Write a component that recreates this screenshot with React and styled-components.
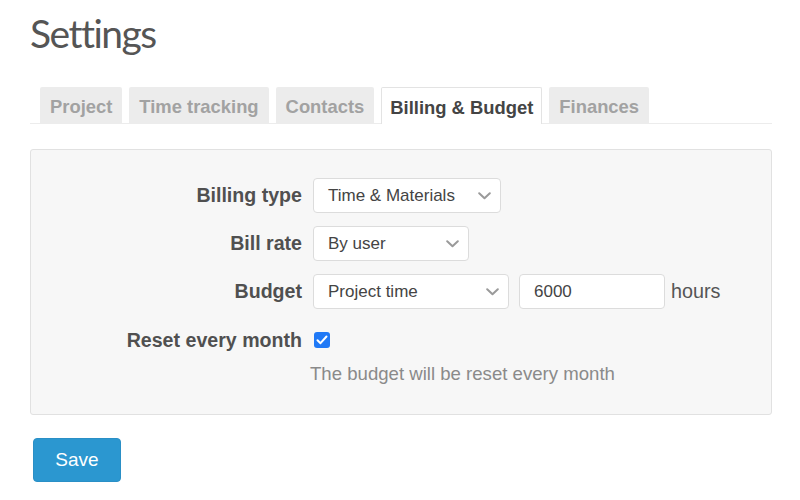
import React from "react";
import styled, { createGlobalStyle } from "styled-components";

const Global = createGlobalStyle`
  html, body { margin: 0; padding: 0; background: #fff; }
  body { font-family: "Liberation Sans", Arial, sans-serif; color: #555; }
`;

const Page = styled.div`
  padding: 9px 28px 0 30px;
`;

const Title = styled.h1`
  margin: 0;
  font-family: Lato, "Open Sans", sans-serif;
  font-weight: 400;
  font-size: 39px;
  line-height: 48px;
  letter-spacing: -1.5px;
  color: #555;
`;

const Tabs = styled.div`
  display: flex;
  gap: 7px;
  margin-top: 30px;
  padding-left: 10px;
  border-bottom: 1px solid #ececec;
`;

const Tab = styled.div`
  box-sizing: border-box;
  height: ${(p) => (p.$active ? "37px" : "36px")};
  line-height: 39px;
  padding: 0 ${(p) => (p.$active ? "8px" : "10px")};
  font-size: 18.4px;
  font-weight: 700;
  color: ${(p) => (p.$active ? "#444" : "#a2a2a2")};
  background: ${(p) => (p.$active ? "#fff" : "#ececec")};
  border: ${(p) => (p.$active ? "1px solid #e3e3e3" : "none")};
  border-bottom: none;
  margin-bottom: ${(p) => (p.$active ? "-1px" : "0")};
  border-radius: 2px 2px 0 0;
`;

const Panel = styled.div`
  margin-top: 25px;
  background: #f7f7f7;
  border: 1px solid #e1e1e1;
  border-radius: 3px;
  padding: 28px 0 29px 0;
`;

const Form = styled.div`
  display: grid;
  grid-template-columns: 271px 1fr;
  column-gap: 11px;
  row-gap: 13px;
`;

const Label = styled.div`
  text-align: right;
  font-size: 19.6px;
  font-weight: 700;
  line-height: ${(p) => p.$h || 35}px;
  color: #505050;
`;

const Controls = styled.div`
  display: flex;
  align-items: center;
  gap: 10px;
`;

const Select = styled.div`
  box-sizing: border-box;
  width: ${(p) => p.$w}px;
  height: 35px;
  display: flex;
  align-items: center;
  justify-content: space-between;
  padding: 0 9px 0 14px;
  background: #fff;
  border: 1px solid #dcdcdc;
  border-radius: 4px;
  font-size: 17px;
  color: #444;
`;

const Input = styled.div`
  box-sizing: border-box;
  width: 146px;
  height: 35px;
  display: flex;
  align-items: center;
  padding: 0 14px;
  background: #fff;
  border: 1px solid #dcdcdc;
  border-radius: 4px;
  font-size: 17px;
  color: #444;
`;

const Unit = styled.span`
  font-size: 19.8px;
  color: #555;
  margin-left: -4px;
`;

const CheckCell = styled.div`
  display: flex;
  flex-direction: column;
`;

const CheckRow = styled.div`
  height: 36px;
  display: flex;
  align-items: center;
`;

const Box = styled.span`
  width: 16px;
  height: 16px;
  margin-left: 1px;
  border-radius: 3px;
  background: #2079f6;
  display: inline-flex;
  align-items: center;
  justify-content: center;
`;

const Help = styled.div`
  margin-top: 5px;
  margin-left: -3px;
  font-size: 18.6px;
  line-height: 22px;
  color: #8a8a8a;
`;

const SaveButton = styled.button`
  margin: 23px 0 0 3px;
  width: 88px;
  height: 44px;
  border: 1px solid #2a8fc6;
  border-radius: 4px;
  background: #2b97d0;
  color: #fff;
  font-family: "Liberation Sans", Arial, sans-serif;
  font-size: 19px;
  padding: 0;
`;

const Chevron = () => (
  <svg width="13" height="8" viewBox="0 0 13 8">
    <path d="M1.2 1.2 L6.5 6.3 L11.8 1.2" fill="none" stroke="#9a9a9a" strokeWidth="2" strokeLinecap="round" strokeLinejoin="round" />
  </svg>
);

const Check = () => (
  <svg width="12" height="10" viewBox="0 0 12 10">
    <path d="M1.5 5.2 L4.5 8.2 L10.5 1.5" fill="none" stroke="#fff" strokeWidth="2" strokeLinecap="round" strokeLinejoin="round" />
  </svg>
);

const tabs = ["Project", "Time tracking", "Contacts", "Billing & Budget", "Finances"];

export default function App() {
  return (
    <Page>
      <Global />
      <Title>Settings</Title>
      <Tabs>
        {tabs.map((t) => (
          <Tab key={t} $active={t === "Billing & Budget"}>{t}</Tab>
        ))}
      </Tabs>
      <Panel>
        <Form>
          <Label>Billing type</Label>
          <Controls>
            <Select $w={188}>Time &amp; Materials<Chevron /></Select>
          </Controls>
          <Label>Bill rate</Label>
          <Controls>
            <Select $w={156}>By user<Chevron /></Select>
          </Controls>
          <Label>Budget</Label>
          <Controls>
            <Select $w={196}>Project time<Chevron /></Select>
            <Input>6000</Input>
            <Unit>hours</Unit>
          </Controls>
          <Label $h={36}>Reset every month</Label>
          <CheckCell>
            <CheckRow>
              <Box><Check /></Box>
            </CheckRow>
            <Help>The budget will be reset every month</Help>
          </CheckCell>
        </Form>
      </Panel>
      <SaveButton>Save</SaveButton>
    </Page>
  );
}
